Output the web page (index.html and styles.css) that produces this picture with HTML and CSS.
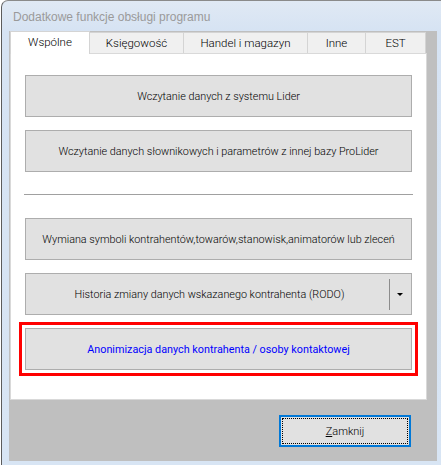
FILE: index.html
```html
<!DOCTYPE html>
<html lang="pl">
<head>
    <meta charset="UTF-8">
    <title>Dodatkowe funkcje obsługi programu</title>
    <link rel="stylesheet" href="styles.css">
</head>
<body>
    <div class="window">
        <div class="titlebar">Dodatkowe funkcje obsługi programu</div>

        <div class="client">
            <div class="tabs">
                <div class="tab active w1">Wspólne</div>
                <div class="tab w2">Księgowość</div>
                <div class="tab w3">Handel i magazyn</div>
                <div class="tab w4">Inne</div>
                <div class="tab w5">EST</div>
            </div>

            <div class="panel">
                <button class="btn">Wczytanie danych z systemu Lider</button>
                <button class="btn">Wczytanie danych słownikowych i parametrów z innej bazy ProLider</button>

                <div class="sep"></div>

                <button class="btn">Wymiana symboli kontrahentów,towarów,stanowisk,animatorów lub zleceń</button>

                <div class="btn split">
                    <span class="split-label">Historia zmiany danych wskazanego kontrahenta (RODO)</span>
                    <span class="split-divider"></span>
                    <span class="split-arrow"></span>
                </div>

                <div class="highlight">
                    <button class="btn blue">Anonimizacja danych kontrahenta / osoby kontaktowej</button>
                </div>
            </div>

            <div class="footer">
                <button class="btn-close"><span class="focus"><u>Z</u>amknij</span></button>
            </div>
        </div>
    </div>
</body>
</html>
```

FILE: styles.css
```css
body {
    margin: 0;
    background: #ffffff;
    font-family: Roboto, "Liberation Sans", Arial, sans-serif;
    font-weight: 300;
    font-size: 11px;
    color: #000;
}

.window {
    margin-left: 1px;
    width: 440px;
    height: 465px;
    border-left: 1px solid #5c5c5c;
    border-top: 1px solid #8a8a8a;
    border-top-left-radius: 7px;
    background: linear-gradient(#e0e9f4, #d6e3f3 30px, #d8e5f4);
    padding-left: 7px;
    box-sizing: border-box;
}

.titlebar {
    height: 30px;
    padding-left: 4px;
    box-sizing: border-box;
    padding-top: 9px;
    font-family: "Liberation Sans", Arial, sans-serif;
    font-weight: 400;
    font-size: 12px;
    color: #9a9a9a;
}

.client {
    width: 428px;
    height: 430px;
    background: #bfbfbf;
    padding-left: 1px;
    box-sizing: border-box;
}

/* zakładki */
.tabs {
    display: flex;
    align-items: flex-end;
    height: 22px;
    position: relative;
    z-index: 1;
}

.tab {
    height: 21px;
    margin-right: -1px;
    box-sizing: border-box;
    border: 1px solid #d4d4d4;
    border-bottom: none;
    background: #f0f0f0;
    display: flex;
    align-items: center;
    justify-content: center;
    padding-bottom: 1px;
    font-size: 11.5px;
}

.tab.active {
    height: 23px;
    margin-bottom: -1px;
    background: #ffffff;
    padding-bottom: 3px;
}

.w1 { width: 80px; }
.w2 { width: 95px; }
.w3 { width: 125px; }
.w4 { width: 59px; }
.w5 { width: 61px; }

.panel {
    width: 417px;
    height: 347px;
    box-sizing: border-box;
    background: #ffffff;
    border: 1px solid #d9d9d9;
    padding: 21px 14px 0;
    display: flex;
    flex-direction: column;
}

.btn {
    width: 387px;
    height: 42px;
    flex-shrink: 0;
    margin-bottom: 13px;
    box-sizing: border-box;
    background: #e1e1e1;
    border: 1px solid #adadad;
    font-family: inherit;
    font-weight: 300;
    font-size: 10.8px;
    color: #000;
    padding: 0;
}

.sep {
    height: 1px;
    background: #a0a0a0;
    margin: 9px -1px 23px;
}

.split {
    display: flex;
    align-items: center;
    margin-bottom: 7px;
}

.split-label {
    flex: 1;
    text-align: center;
    padding-left: 4px;
}

.split-divider {
    width: 1px;
    height: 31px;
    background: #8c8c8c;
}

.split-arrow {
    width: 0;
    height: 0;
    margin: 1px 8px 0 7px;
    border-left: 3px solid transparent;
    border-right: 3px solid transparent;
    border-top: 3px solid #000;
}

.highlight {
    margin: 0 -6px;
    padding: 3px;
    border: 3px solid #ff0000;
    width: 387px;
}

.highlight .btn {
    margin-bottom: 0;
}

.btn.blue {
    color: #0000ff;
    font-weight: 400;
}

.footer {
    display: flex;
    justify-content: flex-end;
    padding: 15px 26px 0 0;
}

.btn-close {
    width: 132px;
    height: 32px;
    box-sizing: border-box;
    background: #e1e1e1;
    border: 2px solid #0078d7;
    padding: 1px;
    font-family: inherit;
    font-weight: 300;
    font-size: 11px;
    color: #000;
}

.focus {
    display: flex;
    align-items: center;
    justify-content: center;
    height: 100%;
    box-sizing: border-box;
    border: 1px dotted #000;
}
```
